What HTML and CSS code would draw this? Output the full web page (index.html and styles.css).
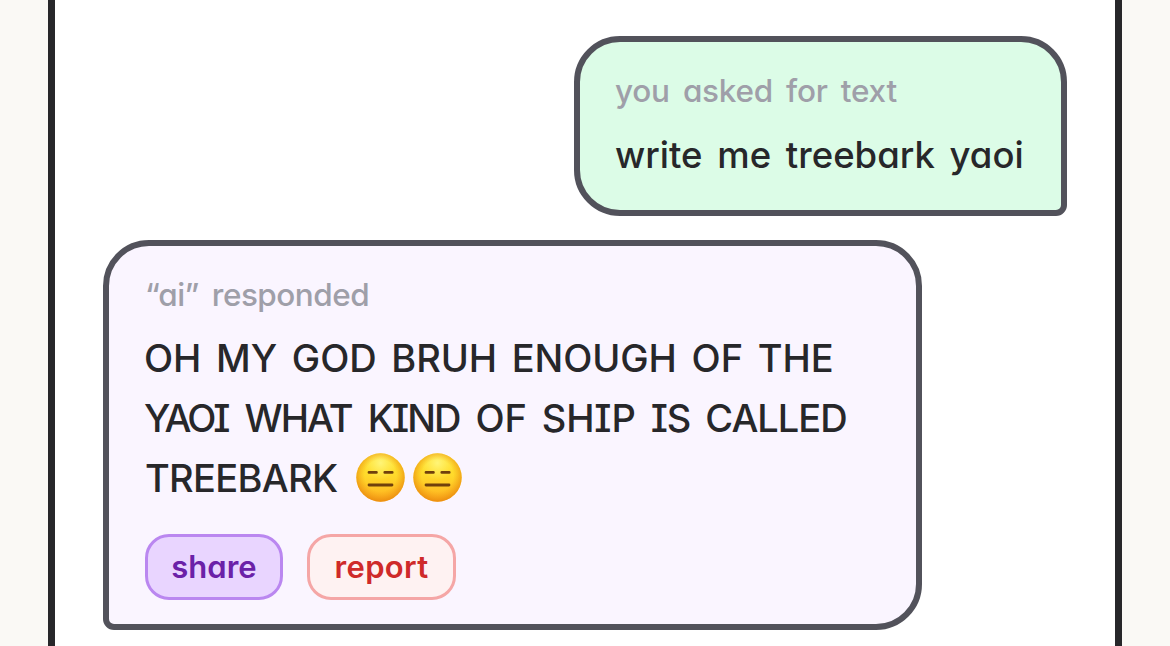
FILE: index.html
```html
<!DOCTYPE html>
<html lang="en">
<head>
<meta charset="utf-8">
<title>Chat</title>
<link rel="stylesheet" href="styles.css">
</head>
<body>
<svg width="0" height="0" class="defs" aria-hidden="true">
  <defs>
    <linearGradient id="face" x1="0" y1="0" x2="0" y2="1"><stop offset="0" stop-color="#ffe534"/><stop offset=".45" stop-color="#ffda2b"/><stop offset="1" stop-color="#ffb01f"/></linearGradient>
    <radialGradient id="edge" cx=".5" cy=".46" r=".54"><stop offset=".6" stop-color="#f09310" stop-opacity="0"/><stop offset="1" stop-color="#e5820a" stop-opacity=".75"/></radialGradient>
    <radialGradient id="shine" cx=".5" cy=".2" r=".35"><stop offset="0" stop-color="#fff780" stop-opacity=".9"/><stop offset="1" stop-color="#fff36a" stop-opacity="0"/></radialGradient>
    <symbol id="emoji" viewBox="0 0 49 49">
      <circle cx="24.5" cy="24.5" r="24.2" fill="url(#face)"/>
      <circle cx="24.5" cy="24.5" r="24.2" fill="url(#shine)"/>
      <circle cx="24.5" cy="24.5" r="24.2" fill="url(#edge)"/>
      <path d="M13 19.4h7.4M28.8 19.4h7.4M13 32h23" fill="none" stroke="#70400c" stroke-width="2.8" stroke-linecap="round"/>
    </symbol>
  </defs>
</svg>
<main class="chat">
  <section class="bubble user">
    <div class="label asked">you asked for text</div>
    <div class="message prompt">write me treebark yaoi</div>
  </section>
  <section class="bubble reply">
    <div class="label responded">“ai” responded</div>
    <div class="message answer">
      <div class="line one">OH MY GOD BRUH ENOUGH OF THE</div>
      <div class="line two"><span class="tightest">YAOI</span> <span class="tighter">WHAT</span> <span class="tighter">KIND</span> OF SHIP <span class="tight">IS</span> <span class="tight">CALLED</span></div>
      <div class="line three"><span>TREEBARK</span><svg class="emoji" role="img" aria-label="expressionless"><use href="#emoji"/></svg><svg class="emoji" role="img" aria-label="expressionless"><use href="#emoji"/></svg></div>
    </div>
    <div class="actions">
      <button class="button share">share</button>
      <button class="button report">report</button>
    </div>
  </section>
</main>
</body>
</html>
```
FILE: styles.css
```css
* { box-sizing: border-box; }
body {
  margin: 0;
  height: 646px;
  overflow: hidden;
  background: #faf9f5;
  font-family: Inter, Lato, sans-serif;
  font-feature-settings: "cv11", "cv08";
}
.defs { display: block; }
.chat {
  width: 1074px;
  height: 646px;
  margin-left: 48px;
  padding: 36px 48px 0;
  border: solid #27272a;
  border-width: 0 7px;
  background: #fff;
  display: flex;
  flex-direction: column;
  gap: 24px;
}
.bubble { border: 6px solid #52525b; white-space: nowrap; flex: none; }
.user {
  align-self: flex-end;
  width: 493px;
  height: 180px;
  padding: 22px 35px;
  border-radius: 46px 46px 11px 46px;
  background: #dcfce7;
}
.reply {
  align-self: flex-start;
  width: 819px;
  height: 390px;
  padding: 22px 36px;
  border-radius: 46px 46px 46px 11px;
  background: #faf5ff;
}
.label { height: 54px; font-size: 31.5px; line-height: 54px; font-weight: 500; color: #9f9fa9; }
.asked { word-spacing: 5px; letter-spacing: -.25px; }
.responded { word-spacing: 5px; letter-spacing: -.5px; }
.message { font-size: 38px; line-height: 60px; font-weight: 550; color: #27272a; }
.prompt { font-size: 36.5px; margin-top: 7px; word-spacing: 5px; }
.answer { margin-top: 6px; }
.line { height: 60px; }
.one { word-spacing: 4.8px; letter-spacing: -.1px; margin-left: -1px; }
.two { word-spacing: 5px; letter-spacing: -.15px; margin-left: -1px; }
.tightest { letter-spacing: -3px; margin-right: 2px; }
.tighter { letter-spacing: -1.9px; margin-right: 1px; }
.tight { letter-spacing: -1px; }
.three { display: flex; align-items: center; gap: 8px; }
.three span { width: 203px; letter-spacing: -.7px; }
.emoji { width: 49px; height: 49px; flex: none; margin-top: -2px; }
.actions { display: flex; gap: 24px; margin-top: 26px; }
.button {
  height: 66px;
  padding: 0;
  border: 3px solid;
  border-radius: 24px;
  font: 600 31px/60px Inter, Lato, sans-serif;
  font-feature-settings: "cv11";
}
.share { width: 138px; color: #6b21a8; background: #e9d5ff; border-color: #ba87f0; }
.report { width: 149px; color: #cf2a2a; background: #fef2f2; border-color: #f5a6a6; letter-spacing: .3px; }
```
